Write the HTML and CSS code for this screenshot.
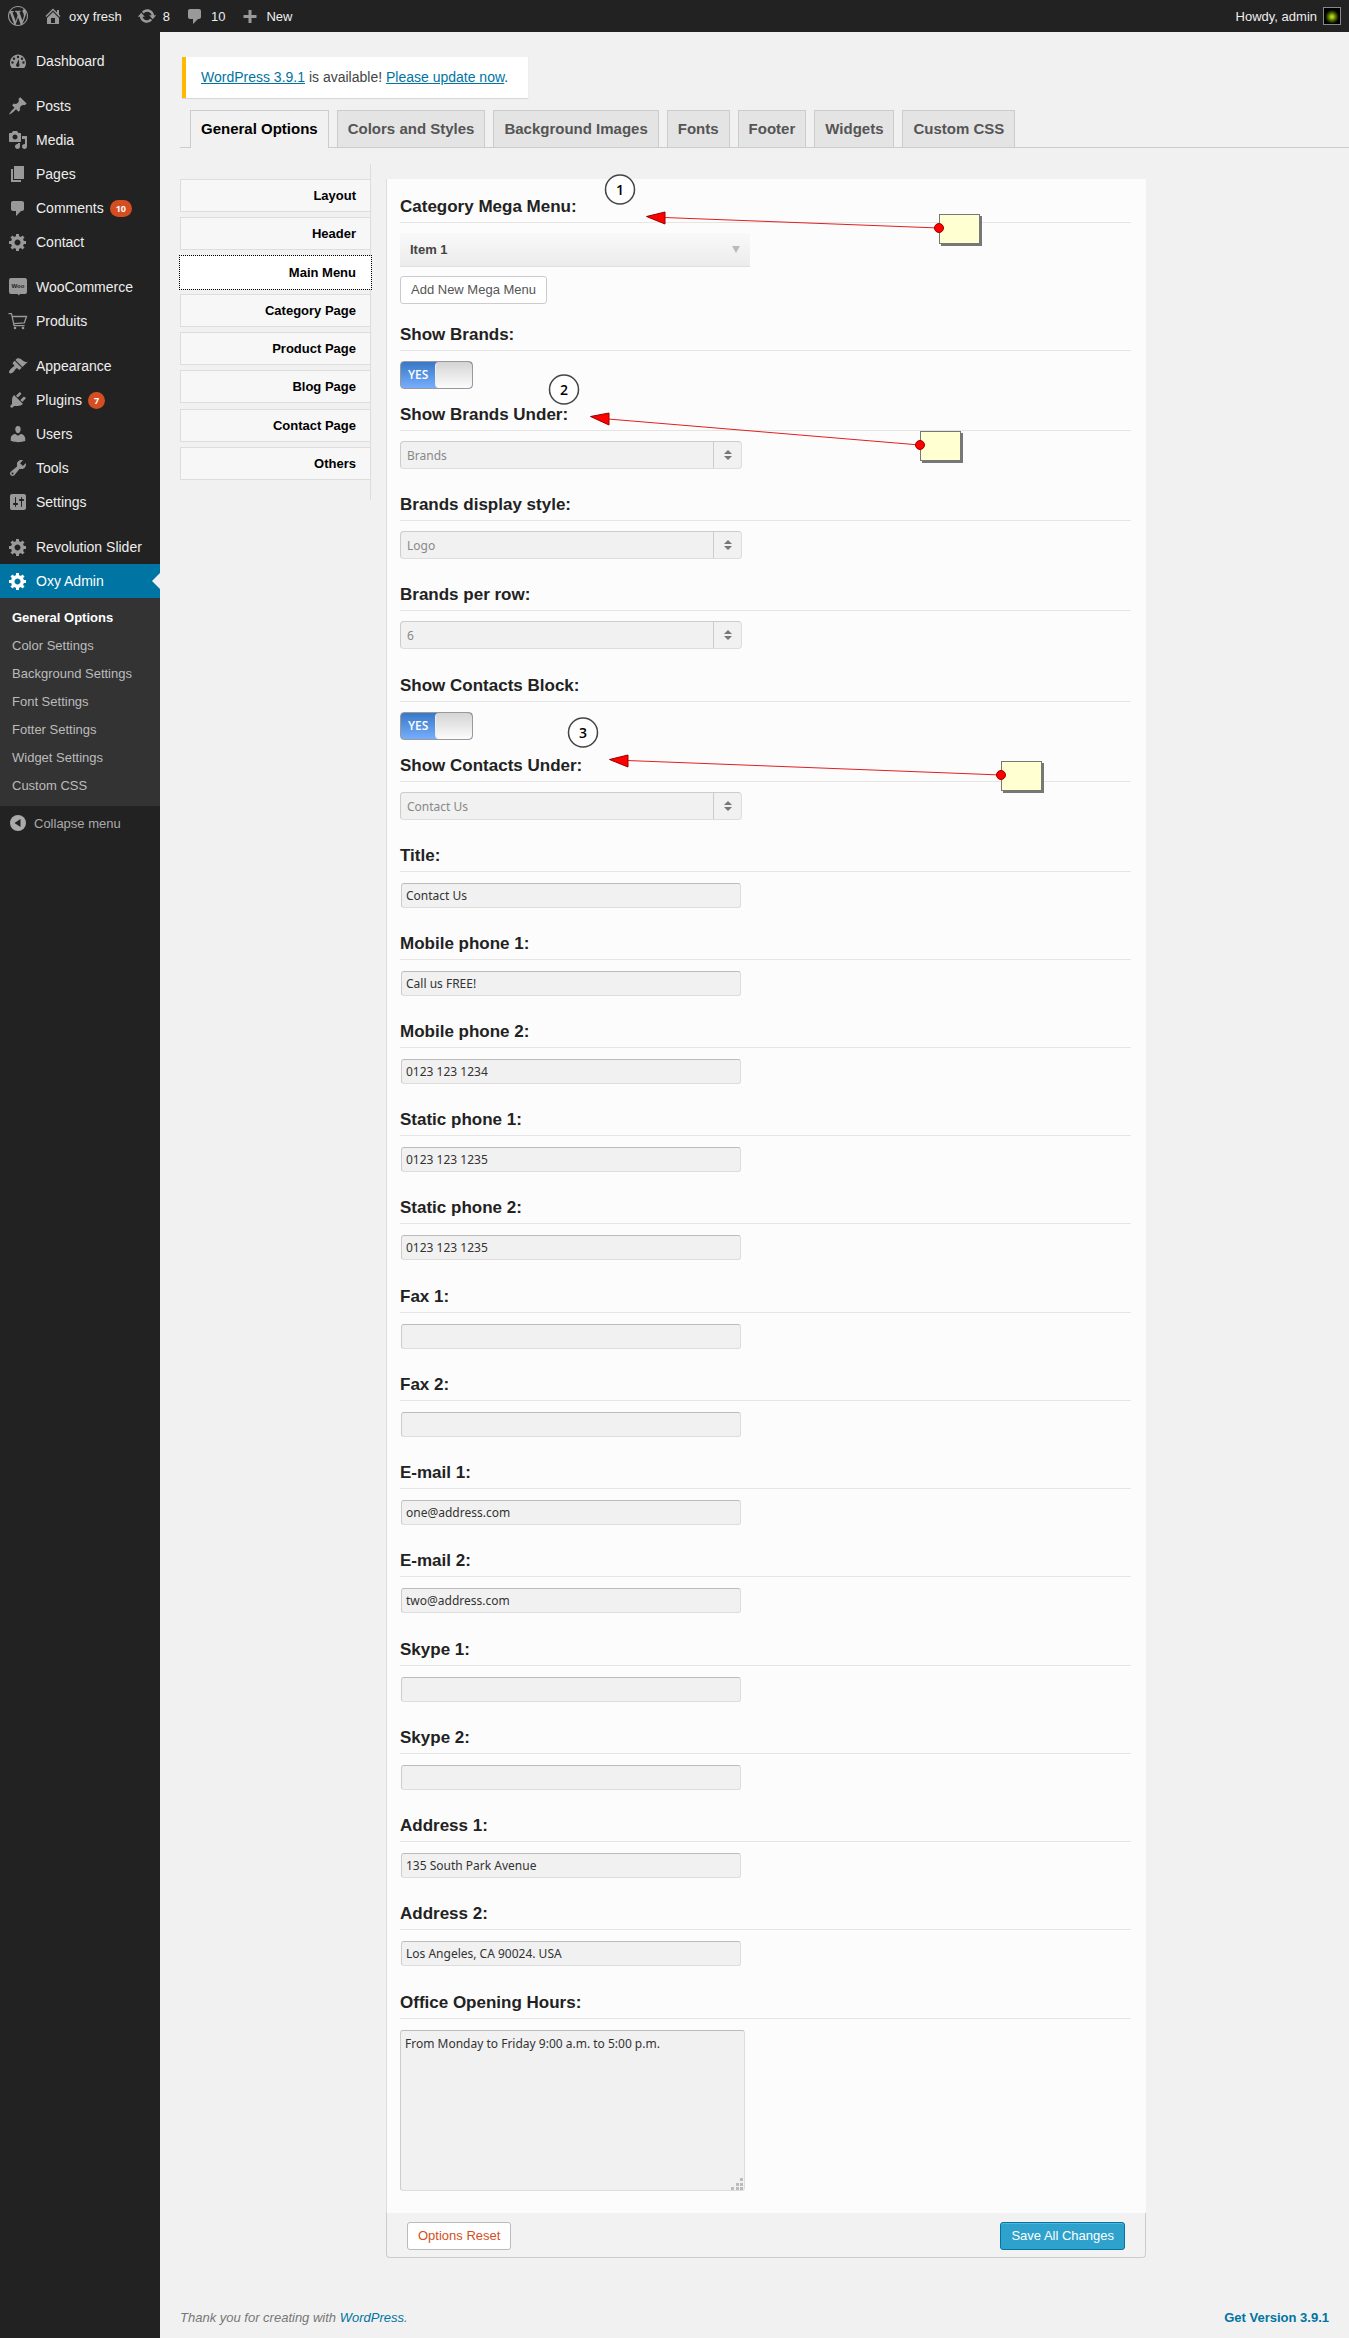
FILE: index.html
```html
<!DOCTYPE html>
<html lang="en">
<head>
<meta charset="utf-8">
<title>Oxy Admin – General Options</title>
<link rel="stylesheet" href="styles.css">
</head>
<body>
<svg class="sprite" aria-hidden="true">
  <symbol id="i-wp" viewBox="0 0 20 20"><path d="M20 10c0-5.51-4.49-10-10-10C4.48 0 0 4.49 0 10c0 5.52 4.48 10 10 10 5.51 0 10-4.48 10-10zM7.78 15.37L4.37 6.22c.55-.02 1.17-.08 1.17-.08.5-.06.44-1.13-.06-1.11 0 0-1.45.11-2.37.11-.18 0-.37 0-.58-.01C4.12 2.69 6.87 1.11 10 1.11c2.33 0 4.45.87 6.05 2.34-.68-.11-1.65.39-1.65 1.58 0 .74.45 1.36.9 2.1.35.61.55 1.36.55 2.46 0 1.49-1.4 5-1.4 5l-3.03-8.37c.54-.02.82-.17.82-.17.5-.05.44-1.25-.06-1.22 0 0-1.44.12-2.38.12-.87 0-2.33-.12-2.33-.12-.5-.03-.56 1.2-.06 1.22l.92.08 1.26 3.41zM17.41 10c.24-.64.74-1.87.43-4.25.7 1.29 1.05 2.71 1.05 4.25 0 3.29-1.73 6.24-4.4 7.78.97-2.59 1.94-5.2 2.92-7.78zM6.1 18.09C3.12 16.65 1.11 13.53 1.11 10c0-1.3.23-2.48.72-3.59C3.25 10.3 4.67 14.2 6.1 18.09zm4.03-6.63l2.58 6.98c-.86.29-1.76.45-2.71.45-.79 0-1.57-.11-2.29-.33.81-2.38 1.62-4.74 2.42-7.1z"/></symbol>
  <symbol id="i-home" viewBox="0 0 20 20"><path d="M16 8.5l1.53 1.53-1.06 1.06L10 4.6l-6.47 6.47-1.06-1.06L10 2.47l4 4V4h2v4.5zm-6-2.46l6 5.99V18H4v-5.97zM12 17v-5H8v5h4z"/></symbol>
  <symbol id="i-update" viewBox="0 0 20 20"><path d="M10.2 3.28c3.53 0 6.43 2.61 6.92 6h2.08l-3.5 4-3.5-4h2.32c-.45-1.97-2.21-3.45-4.32-3.45-1.45 0-2.73.71-3.54 1.78L4.95 5.66C6.23 4.2 8.11 3.28 10.2 3.28zm-.4 13.44c-3.52 0-6.43-2.61-6.92-6H.8l3.5-4c1.17 1.33 2.33 2.67 3.5 4H5.48c.45 1.97 2.21 3.45 4.32 3.45 1.45 0 2.73-.71 3.54-1.78l1.71 1.95c-1.28 1.46-3.15 2.38-5.25 2.38z"/></symbol>
  <symbol id="i-comment" viewBox="0 0 20 20"><path d="M5 3h9c1.100 0 2 .9 2 2v6c0 1.100-.9 2-2 2h-1l-5 5v-5H5c-1.100 0-2-.9-2-2V5c0-1.100.9-2 2-2z"/></symbol>
  <symbol id="i-plus" viewBox="0 0 20 20"><path d="M8.500 4h3v5h5v3h-5v5h-3v-5h-5V9h5z"/></symbol>
  <symbol id="i-dash" viewBox="0 0 20 20"><path fill-rule="evenodd" d="M3.800 17h12.400c1.100-1.300 1.800-3.100 1.800-5.100C18 7.500 14.400 3.500 10 3.500s-8 4-8 8.400c0 2 .7 3.800 1.800 5.100zM10 4.800a1.200 1.200 0 1 1 0 2.400 1.200 1.200 0 0 1 0-2.400zM6 6.500a1.200 1.200 0 1 1 0 2.400 1.200 1.200 0 0 1 0-2.400zm8 0a1.200 1.200 0 1 1 0 2.400 1.200 1.200 0 0 1 0-2.400zm-3.200 1.700.5 4.900a1.800 1.800 0 1 1-2.700-.3zM4.500 10.300a1.200 1.200 0 1 1 0 2.400 1.200 1.200 0 0 1 0-2.400zm11 0a1.200 1.200 0 1 1 0 2.400 1.200 1.200 0 0 1 0-2.400z"/></symbol>
  <symbol id="i-pin" viewBox="0 0 20 20"><path d="M10.440 3.020l1.820-1.820 6.360 6.350-1.830 1.820c-1.050-.68-2.480-.57-3.410.36l-.75.75c-.92.93-1.040 2.350-.35 3.410l-1.830 1.820-2.410-2.410-2.800 2.790c-.42.42-3.380 2.710-3.800 2.290s1.860-3.390 2.280-3.810l2.790-2.790L4.100 9.360l1.830-1.820c1.050.69 2.480.57 3.400-.36l.75-.75c.93-.92 1.050-2.350.36-3.410z"/></symbol>
  <symbol id="i-media" viewBox="0 0 20 20"><path d="M13 11V4c0-.55-.45-1-1-1h-1.670L9 1H5L3.670 3H2c-.55 0-1 .45-1 1v7c0 .55.45 1 1 1h10c.55 0 1-.45 1-1zM7 4.500c1.380 0 2.500 1.120 2.500 2.500S8.380 9.500 7 9.500 4.500 8.380 4.500 7 5.620 4.500 7 4.500zM14 6h5v10.500c0 1.380-1.120 2.500-2.500 2.500S14 17.880 14 16.500s1.120-2.500 2.500-2.500c.17 0 .34.02.5.05V9h-3V6zm-4 8.050V13h2v3.500c0 1.380-1.120 2.500-2.500 2.500S7 17.880 7 16.500 8.120 14 9.500 14c.17 0 .34.02.5.05z"/></symbol>
  <symbol id="i-page" viewBox="0 0 20 20"><path d="M6 15V2h10v13H6zm-1 1h8v2H3V5h2v11z"/></symbol>
  <symbol id="i-gear" viewBox="0 0 20 20"><path d="M18 12h-2.180c-.17.7-.44 1.350-.81 1.930l1.540 1.540-2.100 2.100-1.540-1.540c-.58.36-1.230.63-1.910.79V19H8v-2.180c-.68-.16-1.330-.43-1.910-.79l-1.540 1.540-2.120-2.120 1.540-1.540c-.36-.58-.63-1.230-.79-1.910H1V9.030h2.170c.16-.7.44-1.350.8-1.940L2.430 5.550l2.100-2.100 1.540 1.540c.58-.37 1.240-.64 1.930-.81V2h3v2.180c.68.16 1.330.43 1.910.79l1.540-1.540 2.120 2.120-1.540 1.540c.36.59.64 1.240.8 1.940H18V12zm-8.500 1.500c1.660 0 3-1.340 3-3s-1.340-3-3-3-3 1.340-3 3 1.340 3 3 3z"/></symbol>
  <symbol id="i-cart" viewBox="0 0 20 20"><path fill="none" stroke="currentColor" stroke-width="1.300" d="M.5 2.600h3l2.600 12h10.500M4.200 5.500h14.300l-2.200 6.500-10.600.6"/><circle cx="7" cy="17" r="1.300"/><circle cx="15" cy="17" r="1.300"/></symbol>
  <symbol id="i-brush" viewBox="0 0 20 20"><path d="M14.480 11.060L7.410 3.990l1.500-1.500c.5-.56 2.300-.47 3.510.32 1.210.8 1.430 1.280 2.910 2.100 1.180.64 2.450 1.260 4.450.85zm-.71.71L6.700 4.700 4.930 6.470c-.39.39-.39 1.020 0 1.410l1.060 1.060c.39.39.39 1.030 0 1.420-.6.6-1.430 1.110-2.210 1.690-.35.26-.7.53-1.010.84C1.430 14.230.4 16.080 1.400 17.070c.99 1 2.840-.03 4.180-1.360.31-.31.58-.66.85-1.020.57-.78 1.080-1.610 1.690-2.210.39-.39 1.020-.39 1.410 0l1.060 1.060c.39.39 1.020.39 1.410 0z"/></symbol>
  <symbol id="i-plug" viewBox="0 0 20 20"><path d="M13.110 4.360L9.870 7.600 8 5.730l3.240-3.240c.35-.34 1.050-.2 1.560.32.52.51.66 1.210.31 1.550zm-8 1.770l.91-1.120 9.010 9.010-1.190.84c-.71.71-2.630 1.160-3.820 1.160H6.140L4.900 17.260c-.59.59-1.540.59-2.120 0-.59-.58-.59-1.530 0-2.120l1.240-1.240v-3.880c0-1.130.4-3.190 1.090-3.890zm7.260 3.970l3.240-3.240c.34-.35 1.040-.21 1.550.31.52.51.66 1.210.31 1.550l-3.240 3.250z"/></symbol>
  <symbol id="i-user" viewBox="0 0 20 20"><path d="M10 9.250c-2.270 0-2.730-3.440-2.730-3.440C7 4.020 7.820 2 9.970 2c2.160 0 2.980 2.020 2.710 3.810 0 0-.41 3.440-2.680 3.440zm0 2.570L12.720 10c2.390 0 4.520 2.330 4.520 4.530v2.490s-3.650 1.130-7.240 1.130c-3.650 0-7.240-1.130-7.240-1.130v-2.490c0-2.250 1.940-4.480 4.470-4.480z"/></symbol>
  <symbol id="i-wrench" viewBox="0 0 20 20"><path d="M16.680 9.770c-1.340 1.340-3.300 1.670-4.950.99l-5.410 6.520c-.99.99-2.590.99-3.580 0s-.99-2.590 0-3.570l6.520-5.420c-.68-1.650-.35-3.610.99-4.950 1.280-1.280 3.120-1.620 4.720-1.060l-2.890 2.890 2.820 2.820 2.860-2.870c.53 1.580.18 3.390-1.080 4.650zM3.810 16.210c.4.39 1.040.39 1.430 0 .4-.4.4-1.040 0-1.430-.39-.4-1.030-.4-1.430 0-.39.39-.39 1.030 0 1.430z"/></symbol>
  <symbol id="i-sliders" viewBox="0 0 20 20"><path d="M18 16V4c0-1.100-.9-2-2-2H4c-1.100 0-2 .9-2 2v12c0 1.100.9 2 2 2h12c1.100 0 2-.9 2-2zM8 11h1c.55 0 1 .45 1 1s-.45 1-1 1H8v1.500c0 .28-.22.5-.5.5s-.5-.22-.5-.5V13H6c-.55 0-1-.45-1-1s.45-1 1-1h1V5.500c0-.28.22-.5.5-.5s.5.22.5.5V11zm5-2h-1c-.55 0-1-.45-1-1s.45-1 1-1h1V5.500c0-.28.22-.5.5-.5s.5.22.5.5V7h1c.55 0 1 .45 1 1s-.45 1-1 1h-1v5.500c0 .28-.22.5-.5.5s-.5-.22-.5-.5V9z"/></symbol>
  <symbol id="i-updown" viewBox="0 0 8 10"><path d="M4 0l4 4H0zM4 10l4-4H0z"/></symbol>
</svg>

<header class="adminbar">
  <a class="bar-item" href="#" aria-label="About WordPress"><svg class="icon"><use href="#i-wp"/></svg></a>
  <a class="bar-item" href="#"><svg class="icon"><use href="#i-home"/></svg>oxy fresh</a>
  <a class="bar-item" href="#"><svg class="icon"><use href="#i-update"/></svg>8</a>
  <a class="bar-item" href="#"><svg class="icon"><use href="#i-comment"/></svg>10</a>
  <a class="bar-item" href="#"><svg class="icon"><use href="#i-plus"/></svg>New</a>
  <a class="bar-item account" href="#">Howdy, admin<span class="avatar"></span></a>
</header>

<div class="shell">
  <nav class="sidebar" aria-label="Main menu">
    <ul class="menu">
      <li><a class="menu-link" href="#"><svg class="icon"><use href="#i-dash"/></svg>Dashboard</a></li>
    </ul>
    <ul class="menu">
      <li><a class="menu-link" href="#"><svg class="icon"><use href="#i-pin"/></svg>Posts</a></li>
      <li><a class="menu-link" href="#"><svg class="icon"><use href="#i-media"/></svg>Media</a></li>
      <li><a class="menu-link" href="#"><svg class="icon"><use href="#i-page"/></svg>Pages</a></li>
      <li><a class="menu-link" href="#"><svg class="icon"><use href="#i-comment"/></svg>Comments<span class="count">10</span></a></li>
      <li><a class="menu-link" href="#"><svg class="icon"><use href="#i-gear"/></svg>Contact</a></li>
    </ul>
    <ul class="menu">
      <li><a class="menu-link" href="#"><svg class="icon" viewBox="0 0 20 20"><path d="M3 1h14a2 2 0 0 1 2 2v12a2 2 0 0 1-2 2h-5l-1 1.500L9.500 17H3a2 2 0 0 1-2-2V3a2 2 0 0 1 2-2z"/><text class="woo" x="10" y="11" text-anchor="middle">Woo</text></svg>WooCommerce</a></li>
      <li><a class="menu-link" href="#"><svg class="icon"><use href="#i-cart"/></svg>Produits</a></li>
    </ul>
    <ul class="menu">
      <li><a class="menu-link" href="#"><svg class="icon"><use href="#i-brush"/></svg>Appearance</a></li>
      <li><a class="menu-link" href="#"><svg class="icon"><use href="#i-plug"/></svg>Plugins<span class="count">7</span></a></li>
      <li><a class="menu-link" href="#"><svg class="icon"><use href="#i-user"/></svg>Users</a></li>
      <li><a class="menu-link" href="#"><svg class="icon"><use href="#i-wrench"/></svg>Tools</a></li>
      <li><a class="menu-link" href="#"><svg class="icon"><use href="#i-sliders"/></svg>Settings</a></li>
    </ul>
    <ul class="menu">
      <li><a class="menu-link" href="#"><svg class="icon"><use href="#i-gear"/></svg>Revolution Slider</a></li>
      <li><a class="menu-link current" href="#"><svg class="icon"><use href="#i-gear"/></svg>Oxy Admin</a>
        <ul class="submenu">
          <li><a class="active" href="#">General Options</a></li>
          <li><a href="#">Color Settings</a></li>
          <li><a href="#">Background Settings</a></li>
          <li><a href="#">Font Settings</a></li>
          <li><a href="#">Fotter Settings</a></li>
          <li><a href="#">Widget Settings</a></li>
          <li><a href="#">Custom CSS</a></li>
        </ul>
      </li>
    </ul>
    <button class="collapse" type="button"><svg class="collapse-icon" viewBox="0 0 16 16"><circle cx="8" cy="8" r="8"/><path class="hole" d="M10.500 4v8L4.500 8z"/></svg>Collapse menu</button>
  </nav>

  <main class="content">
    <p class="notice"><a href="#">WordPress 3.9.1</a> is available! <a href="#">Please update now</a>.</p>

    <nav class="tabs" aria-label="Sections">
      <a class="tab selected" href="#">General Options</a>
      <a class="tab" href="#">Colors and Styles</a>
      <a class="tab" href="#">Background Images</a>
      <a class="tab" href="#">Fonts</a>
      <a class="tab" href="#">Footer</a>
      <a class="tab" href="#">Widgets</a>
      <a class="tab" href="#">Custom CSS</a>
    </nav>

    <div class="columns">
      <nav class="subnav" aria-label="General options">
        <a href="#">Layout</a>
        <a href="#">Header</a>
        <a class="chosen" href="#">Main Menu</a>
        <a href="#">Category Page</a>
        <a href="#">Product Page</a>
        <a href="#">Blog Page</a>
        <a href="#">Contact Page</a>
        <a href="#">Others</a>
      </nav>

      <form class="panel">
        <div class="panel-body">
          <section class="group">
            <div class="field mega">
              <h3 class="title">Category Mega Menu:</h3>
              <button class="accordion" type="button">Item 1<span class="caret"></span></button>
              <button class="button" type="button">Add New Mega Menu</button>
            </div>
            <div class="field toggle">
              <label class="title" for="brands">Show Brands:</label>
              <span class="switch"><input type="checkbox" id="brands" checked><span>YES</span></span>
            </div>
            <div class="field">
              <label class="title" for="brands-under">Show Brands Under:</label>
              <div class="select"><select id="brands-under"><option>Brands</option></select><svg class="arrows"><use href="#i-updown"/></svg></div>
            </div>
            <div class="field">
              <label class="title" for="brands-style">Brands display style:</label>
              <div class="select"><select id="brands-style"><option>Logo</option></select><svg class="arrows"><use href="#i-updown"/></svg></div>
            </div>
            <div class="field">
              <label class="title" for="brands-row">Brands per row:</label>
              <div class="select"><select id="brands-row"><option>6</option></select><svg class="arrows"><use href="#i-updown"/></svg></div>
            </div>
          </section>

          <section class="group">
            <div class="field toggle">
              <label class="title" for="contacts">Show Contacts Block:</label>
              <span class="switch"><input type="checkbox" id="contacts" checked><span>YES</span></span>
            </div>
            <div class="field">
              <label class="title" for="contacts-under">Show Contacts Under:</label>
              <div class="select"><select id="contacts-under"><option>Contact Us</option></select><svg class="arrows"><use href="#i-updown"/></svg></div>
            </div>
            <div class="field"><label class="title" for="f-title">Title:</label><input class="text" type="text" id="f-title" value="Contact Us"></div>
            <div class="field"><label class="title" for="f-mob1">Mobile phone 1:</label><input class="text" type="text" id="f-mob1" value="Call us FREE!"></div>
            <div class="field"><label class="title" for="f-mob2">Mobile phone 2:</label><input class="text" type="text" id="f-mob2" value="0123 123 1234"></div>
            <div class="field"><label class="title" for="f-st1">Static phone 1:</label><input class="text" type="text" id="f-st1" value="0123 123 1235"></div>
            <div class="field"><label class="title" for="f-st2">Static phone 2:</label><input class="text" type="text" id="f-st2" value="0123 123 1235"></div>
          </section>

          <section class="group">
            <div class="field"><label class="title" for="f-fax1">Fax 1:</label><input class="text" type="text" id="f-fax1"></div>
            <div class="field"><label class="title" for="f-fax2">Fax 2:</label><input class="text" type="text" id="f-fax2"></div>
            <div class="field"><label class="title" for="f-em1">E-mail 1:</label><input class="text" type="text" id="f-em1" value="one@address.com"></div>
            <div class="field"><label class="title" for="f-em2">E-mail 2:</label><input class="text" type="text" id="f-em2" value="two@address.com"></div>
          </section>

          <section class="group">
            <div class="field"><label class="title" for="f-sk1">Skype 1:</label><input class="text" type="text" id="f-sk1"></div>
            <div class="field"><label class="title" for="f-sk2">Skype 2:</label><input class="text" type="text" id="f-sk2"></div>
            <div class="field"><label class="title" for="f-ad1">Address 1:</label><input class="text" type="text" id="f-ad1" value="135 South Park Avenue"></div>
            <div class="field"><label class="title" for="f-ad2">Address 2:</label><input class="text" type="text" id="f-ad2" value="Los Angeles, CA 90024. USA"></div>
          </section>

          <section class="group">
            <div class="field last">
              <label class="title" for="f-hours">Office Opening Hours:</label>
              <div class="area"><textarea id="f-hours">From Monday to Friday 9:00 a.m. to 5:00 p.m.</textarea><svg class="grip" viewBox="0 0 12 12"><path d="M9 0h3v3H9zM9 5h3v3H9zM9 9h3v3H9zM5 5h3v3H5zM5 9h3v3H5zM0 9h3v3H0z"/></svg></div>
            </div>
          </section>
        </div>

        <div class="panel-foot">
          <button class="button reset" type="reset">Options Reset</button>
          <button class="button save" type="submit">Save All Changes</button>
        </div>

        <svg class="callouts" width="760" height="640" viewBox="0 0 760 640">
          <g class="marker"><circle cx="234" cy="10.500" r="14.500"/><text x="234" y="16">1</text></g>
          <g class="marker"><circle cx="178" cy="210.500" r="14.500"/><text x="178" y="216">2</text></g>
          <g class="marker"><circle cx="197" cy="553.500" r="14.500"/><text x="197" y="559">3</text></g>
          <g class="note"><path class="shade" d="M555 37h41v30h-41z"/><rect x="553.500" y="35.500" width="40" height="29"/><path class="line" d="M278 38.500L553 49"/><path class="tip" d="M260.500 37.500L279 33v12z"/><circle cx="553" cy="49" r="4.500"/></g>
          <g class="note"><path class="shade" d="M536 254h41v30h-41z"/><rect x="534.500" y="252.500" width="40" height="29"/><path class="line" d="M222 240L534 266"/><path class="tip" d="M204.500 237.500L223 234v12z"/><circle cx="534" cy="266" r="4.500"/></g>
          <g class="note"><path class="shade" d="M617 584h41v30h-41z"/><rect x="615.500" y="582.500" width="40" height="29"/><path class="line" d="M241 581.500L615 596"/><path class="tip" d="M223.500 580.500L242 576v12z"/><circle cx="615" cy="596" r="4.500"/></g>
        </svg>
      </form>
    </div>

    <footer class="page-foot">
      <span class="thanks">Thank you for creating with <a href="#">WordPress</a>.</span>
      <a class="version" href="#">Get Version 3.9.1</a>
    </footer>
  </main>
</div>
</body>
</html>
```
FILE: styles.css
```css
* { box-sizing: border-box; }

body {
  margin: 0;
  background: #f1f1f1;
  color: #444;
  font: 13px/19px "Liberation Sans", Arial, sans-serif;
}

a { color: #0074a2; }
ul { margin: 0; padding: 0; list-style: none; }
button, input, select, textarea { margin: 0; font: inherit; }
.sprite { position: absolute; width: 0; height: 0; }
.icon { flex: none; width: 20px; height: 20px; fill: currentColor; color: #999; }

/* Top bar */
.adminbar {
  display: flex;
  align-items: center;
  gap: 15px;
  height: 32px;
  padding: 0 8px;
  background: #222;
}
.bar-item { display: flex; align-items: center; gap: 6px; color: #eee; text-decoration: none; }
.account { margin-left: auto; }
.avatar {
  width: 18px;
  height: 18px;
  border: 1px solid #888;
  background: radial-gradient(circle at 50% 55%, #b4d41e 0 1px, #6c8a06 3px, #2c4000 5px, #000 7px);
}

/* Side menu */
.shell { display: flex; min-height: calc(100vh - 32px); }
.sidebar { flex: none; width: 160px; padding-top: 12px; background: #222; }
.menu { margin-bottom: 11px; }
.menu-link {
  display: flex;
  align-items: center;
  gap: 8px;
  height: 34px;
  padding-left: 8px;
  color: #eee;
  font-size: 14px;
  text-decoration: none;
  white-space: nowrap;
}
.menu-link.current { position: relative; background: #0074a2; color: #fff; }
.current .icon { color: #fff; }
.current::after {
  content: "";
  position: absolute;
  right: 0;
  top: 9px;
  border: 8px solid transparent;
  border-left-width: 0;
  border-right-color: #f1f1f1;
}
.woo { fill: #222; font: bold 6px "Liberation Sans", sans-serif; }
.count {
  min-width: 17px;
  margin-left: -2px;
  padding: 0 6px;
  border-radius: 10px;
  background: #d54e21;
  color: #fff;
  font: bold 9px/17px "Open Sans", sans-serif;
  text-align: center;
}
.submenu { padding: 6px 0; background: #333; }
.submenu a {
  display: block;
  padding: 0 12px;
  color: #bbb;
  line-height: 28px;
  text-decoration: none;
}
.submenu .active { color: #fff; font-weight: bold; }
.collapse {
  display: flex;
  align-items: center;
  gap: 8px;
  height: 34px;
  margin-top: -11px;
  padding: 0 10px;
  border: 0;
  background: none;
  color: #aaa;
}
.collapse-icon { width: 16px; height: 16px; fill: #aaa; }
.collapse-icon .hole { fill: #222; }

/* Content */
.content { flex: 1; min-width: 0; padding: 25px 20px 11px; display: flex; flex-direction: column; }
.notice {
  align-self: flex-start;
  margin: 0 0 12px 2px;
  padding: 11px 20px 11px 15px;
  border-left: 4px solid #ffba00;
  background: #fff;
  box-shadow: 0 1px 1px rgba(0, 0, 0, .1);
  font-size: 14px;
}
.tabs {
  display: flex;
  gap: 8px;
  margin-right: -20px;
  padding-left: 10px;
  border-bottom: 1px solid #ccc;
}
.tab {
  padding: 6px 10px;
  border: 1px solid #ccc;
  border-bottom: 0;
  background: #e4e4e4;
  color: #555;
  font: bold 15px/24px "Liberation Sans", Arial, sans-serif;
  text-decoration: none;
  white-space: nowrap;
}
.tab.selected { margin-bottom: -1px; padding-bottom: 7px; background: #f1f1f1; color: #000; }

.columns { display: flex; align-items: flex-start; gap: 15px; margin-top: 16px; }
.subnav {
  display: flex;
  flex: none;
  flex-direction: column;
  justify-content: space-between;
  width: 191px;
  min-height: 336px;
  padding: 15px 0 20px;
  border-right: 1px solid #ddd;
}
.subnav a {
  padding: 6px 14px;
  border: 1px solid #ddd;
  border-right: 0;
  background: #f7f7f7;
  color: #000;
  font-weight: bold;
  text-align: right;
  text-decoration: none;
}
.subnav .chosen { margin-right: -1px; padding-right: 15px; border-color: #fff; background: #fff; outline: 1px dotted #000; }

/* Options panel */
.panel { position: relative; flex: 0 1 760px; margin-top: 15px; }
.panel-body {
  display: flex;
  flex-direction: column;
  gap: 1px;
  padding: 17px 15px 22px 13px;
  border-left: 1px solid #ddd;
  background: #fcfcfc;
}
.field { padding-bottom: 25px; }
.field.mega { padding-bottom: 20px; }
.field.toggle { padding-bottom: 15px; }
.field.last { padding-bottom: 0; }
.title {
  display: block;
  margin: 0 0 10px;
  padding-bottom: 4px;
  border-bottom: 1px solid #e5e5e5;
  color: #222;
  font-size: 17px;
  font-weight: bold;
  line-height: 22px;
}
.accordion {
  display: flex;
  align-items: center;
  justify-content: space-between;
  width: 350px;
  max-width: 100%;
  height: 34px;
  margin-bottom: 9px;
  padding: 0 10px;
  border: 0;
  border-bottom: 1px solid #dfdfdf;
  background: linear-gradient(#f9f9f9, #ececec);
  color: #444;
  font-weight: bold;
}
.caret { border: 4px solid transparent; border-top: 7px solid #bbb; border-bottom: 0; }
.button {
  height: 28px;
  padding: 0 10px;
  border: 1px solid #ccc;
  border-radius: 3px;
  background: #fff;
  color: #555;
  line-height: 26px;
}
.reset { color: #d54e21; border-color: #bbb; }
.save { background: #2ea2cc; border-color: #0074a2; color: #fff; box-shadow: inset 0 1px 0 rgba(120, 200, 230, .5); }

.switch, .select, .area { display: grid; }
.switch > *, .select > *, .area > * { grid-area: 1 / 1; }
.switch { width: 73px; }
.switch input {
  display: flex;
  justify-content: flex-end;
  appearance: none;
  height: 28px;
  border: 1px solid #999;
  border-radius: 4px;
  background: linear-gradient(#3878c8, #76aefc);
  overflow: hidden;
}
.switch input::before {
  content: "";
  width: 36px;
  border-left: 1px solid #eee;
  border-radius: 4px;
  background: linear-gradient(#d4d4d4, #fcfcfc);
}
.switch span {
  align-self: center;
  padding-left: 8px;
  color: #fff;
  font: 600 12px/16px "Open Sans", sans-serif;
  pointer-events: none;
}

.select { width: 342px; max-width: 100%; }
.select select {
  appearance: none;
  height: 28px;
  padding: 0 6px;
  border: 1px solid #ccc;
  border-right-color: #ddd;
  border-bottom-color: #ddd;
  border-radius: 4px;
  background: linear-gradient(#ccc, #ccc) right 27px top / 1px 100% no-repeat #f1f1f1;
  color: #888;
}
.arrows { align-self: center; justify-self: end; width: 8px; height: 10px; margin-right: 10px; fill: #777; pointer-events: none; }
.text {
  display: block;
  width: 340px;
  max-width: 100%;
  height: 25px;
  margin: 11px 1px 0;
  padding: 0 4px;
  border: 1px solid #ddd;
  border-top-color: #bbb;
  border-left-color: #ccc;
  border-radius: 3px;
  background: #f1f1f1;
  color: #333;
}
.area { width: 345px; max-width: 100%; margin-top: 11px; }
.area textarea {
  height: 161px;
  padding: 3px 4px;
  border: 1px solid #ddd;
  border-top-color: #bbb;
  border-left-color: #ccc;
  border-radius: 3px;
  background: #f1f1f1;
  color: #333;
  resize: none;
}
.text, .select select, .area textarea { font-family: "Noto Sans", "Open Sans", sans-serif; font-size: 12px; }
.grip { align-self: end; justify-self: end; width: 12px; height: 12px; margin: 0 2px 1px; fill: #bbb; pointer-events: none; }
.panel-foot {
  display: flex;
  justify-content: space-between;
  padding: 9px 20px 7px;
  border: 1px solid #ccc;
  border-top: 0;
  border-radius: 0 0 4px 4px;
  background: #f2f2f2;
}

/* Numbered callouts laid over the form */
.callouts { position: absolute; left: 0; top: 0; overflow: visible; pointer-events: none; }
.marker circle { fill: #fff; stroke: #444; stroke-width: 1.500; }
.marker text { fill: #000; font: 600 14px "Open Sans", sans-serif; text-anchor: middle; }
.note rect { fill: #ffffd2; stroke: #777; }
.note .shade { fill: #777; }
.note .line { stroke: #e02020; fill: none; }
.note .tip, .note circle { fill: #f00; stroke: #900; stroke-width: 1; }

.page-foot { display: flex; justify-content: space-between; margin-top: auto; padding-top: 50px; }
.thanks { color: #777; font-style: italic; }
.page-foot a { text-decoration: none; }
.version { font-weight: bold; }
```
